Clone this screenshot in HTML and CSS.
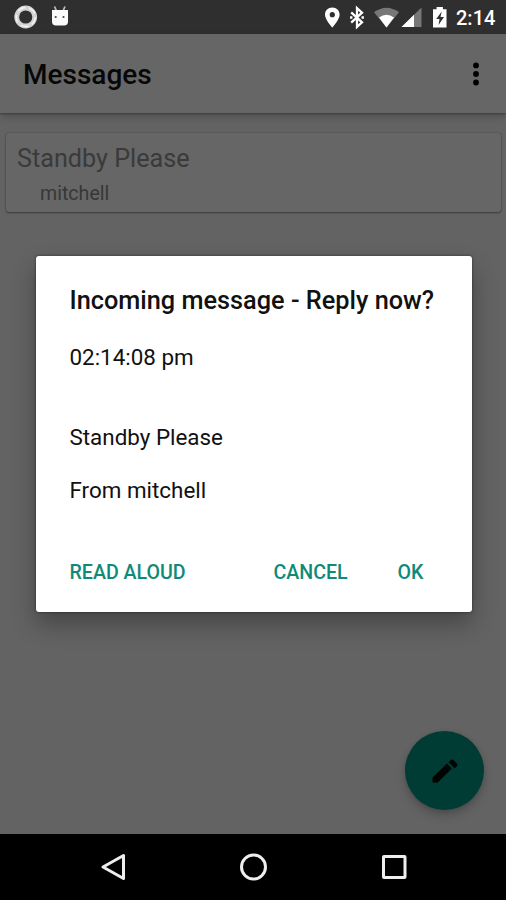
FILE: index.html
```html
<!DOCTYPE html>
<html lang="en">
<head>
<meta charset="utf-8">
<title>Messages</title>
<link rel="stylesheet" href="styles.css">
</head>
<body>
<div class="phone">
  <header class="status">
    <svg class="status-left" width="120" height="34" viewBox="0 0 120 34">
      <circle cx="25.7" cy="17" r="9" fill="none" stroke="#d2d2d2" stroke-width="4.8"/>
      <circle cx="25.7" cy="17" r="9.5" fill="none" stroke="#f3f3f3" stroke-width="1.5" stroke-dasharray="8 4"/>
      <path d="M54.5 6.500l2 4.500M65 6.500l-2 4.500" stroke="#bbb" stroke-width="1.8"/>
      <path d="M52 10h16v11.500q0 4-4 4h-8q-4 0-4-4z" fill="#fafafa"/>
      <circle cx="55.700" cy="17" r="1.100" fill="#444"/><circle cx="63.500" cy="17" r="1.100" fill="#444"/>
    </svg>
    <svg class="status-right" width="140" height="34" viewBox="314 0 140 34">
      <path d="M332.300 7.500c-4.200 0-7.300 3.100-7.300 7.200 0 5 7.300 12.800 7.300 12.800s7.300-7.800 7.300-12.800c0-4.100-3.100-7.200-7.300-7.200zm0 4.600a2.600 2.600 0 1 1 0 5.200 2.600 2.600 0 0 1 0-5.200z" fill="#fff" fill-rule="evenodd"/>
      <path d="M351.200 12.300l10.800 10-5 4.500V8.200l5 4.500-10.800 10" fill="none" stroke="#fff" stroke-width="2.300"/>
      <path d="M350 16.300h2.400v2.400H350zM361.500 16.300h2.400v2.400h-2.400z" fill="#fff"/>
      <path d="M374 12.200q12.500-9 25 0L386.500 27.500z" fill="#777"/>
      <path d="M379 17.500q7.500-5.500 15 0l-7.500 10z" fill="#fff"/>
      <path d="M421.500 7.500v19.500H401.500z" fill="#777"/>
      <path d="M414 14.800v12.200H401.500z" fill="#fff"/>
      <path d="M433 9.200h3.600V7h6.300v2.200h3.600v18.300H433z" fill="#fff"/>
      <path d="M441.700 11.500l-5.500 7.500h3.300l-1 6 5.500-8h-3.500z" fill="#303030"/>
    </svg>
    <span class="clock">2:14</span>
  </header>
  <section class="toolbar">
    <h1>Messages</h1>
    <svg width="8" height="24" viewBox="0 0 8 24"><circle cx="4" cy="3.400" r="2.900"/><circle cx="4" cy="12" r="2.900"/><circle cx="4" cy="20.500" r="2.900"/></svg>
  </section>
  <main class="content">
    <article class="card">
      <p class="subject">Standby Please</p>
      <p class="sender">mitchell</p>
    </article>
    <div class="fab">
      <svg width="28" height="28" viewBox="0 0 28 28"><path d="M1.800 20.200L16 6.500l4.800 5L7 25.300Q6.500 25.800 5.800 25.800H3q-1.500 0-1.500-1.400v-3q0-.7.300-1.200zM17.500 5.200l2.200-2.100q1.400-1.100 2.700 0l3.500 3.500q1.100 1.400 0 2.700l-2.200 2z" fill="#020403"/></svg>
    </div>
  </main>
  <nav class="navbar">
    <svg width="28" height="30" viewBox="0 0 28 30"><path d="M23.500 3.500v23L3 15z" fill="none" stroke="#eee" stroke-width="3" stroke-linejoin="round"/></svg>
    <svg width="28" height="30" viewBox="0 0 28 30"><circle cx="13.500" cy="15" r="12" fill="none" stroke="#eee" stroke-width="3"/></svg>
    <svg width="28" height="30" viewBox="0 0 28 30"><rect x="3.500" y="4.500" width="21.500" height="21" rx=".5" fill="none" stroke="#eee" stroke-width="3"/></svg>
  </nav>
  <div class="dialog" role="dialog">
    <h2>Incoming message - Reply now?</h2>
    <p class="time">02:14:08 pm</p>
    <p class="body">Standby Please</p>
    <p class="from">From mitchell</p>
    <div class="actions">
      <button class="read">READ ALOUD</button>
      <button class="cancel">CANCEL</button>
      <button class="ok">OK</button>
    </div>
  </div>
</div>
</body>
</html>
```
FILE: styles.css
```css
* { box-sizing: border-box; }
body, h1, h2, p { margin: 0; }
body { font-family: Roboto, "Liberation Sans", sans-serif; }
svg { display: block; flex: none; }
.phone {
  position: relative;
  width: 506px;
  height: 900px;
  display: flex;
  flex-direction: column;
  overflow: hidden;
  background: #636363;
}
.status {
  height: 34px;
  display: flex;
  justify-content: space-between;
  background: #2f2f2f;
}
.status-right { margin-left: auto; }
.clock {
  width: 52px;
  padding-left: 2px;
  font-size: 20px;
  line-height: 36px;
  font-weight: 500;
  color: #fff;
}
.toolbar {
  height: 79px;
  display: flex;
  align-items: center;
  justify-content: space-between;
  padding: 1px 26px 0 23px;
  background: #666;
  box-shadow: 0 1px 2px rgba(0, 0, 0, .3), 0 4px 8px rgba(0, 0, 0, .18);
  z-index: 1;
}
.toolbar h1 { padding-top: 2px; font-size: 28px; line-height: 34px; font-weight: 500; color: #070707; }
.content { position: relative; flex: 1; padding: 20px 5px 0 6px; }
.card {
  height: 79px;
  padding: 8px 11px;
  border-radius: 3px;
  background: #666;
  box-shadow: 0 1px 2px rgba(0, 0, 0, .38), 0 0 2px rgba(0, 0, 0, .2);
}
.subject { font-size: 25.2px; line-height: 36px; color: #3a3a3a; }
.sender { padding-left: 23px; font-size: 19.6px; line-height: 34px; color: #373737; }
.fab {
  position: absolute;
  right: 22px;
  bottom: 23.500px;
  width: 79px;
  height: 79px;
  display: flex;
  align-items: center;
  justify-content: center;
  border-radius: 50%;
  background: #003c34;
  box-shadow: 0 6px 10px rgba(0, 0, 0, .18), 0 1px 4px rgba(0, 0, 0, .12);
}
.navbar {
  height: 66.500px;
  display: flex;
  justify-content: center;
  align-items: center;
  gap: 112px;
  padding-left: 1px;
  background: #000;
}
.dialog {
  position: absolute;
  left: 35.500px;
  top: 255.500px;
  width: 436px;
  height: 356px;
  padding: 28px 34px 0;
  border-radius: 3px;
  background: #fff;
  color: #111;
  box-shadow: 0 0 3px rgba(0, 0, 0, .5), 0 12px 24px rgba(0, 0, 0, .3);
}
.dialog h2 { font-size: 25.300px; line-height: 34px; font-weight: 500; white-space: nowrap; }
.dialog p { font-size: 22.400px; line-height: 30px; }
.time { padding-top: 24px; }
.body { padding-top: 50px; }
.from { padding-top: 23px; }
.actions { display: flex; padding-top: 53px; }
.actions button {
  padding: 0;
  border: 0;
  background: none;
  font: 500 19.600px/30px Roboto, "Liberation Sans", sans-serif;
  color: #108a78;
}
.cancel { margin-left: auto; }
.ok { margin: 0 14px 0 50px; }
```
